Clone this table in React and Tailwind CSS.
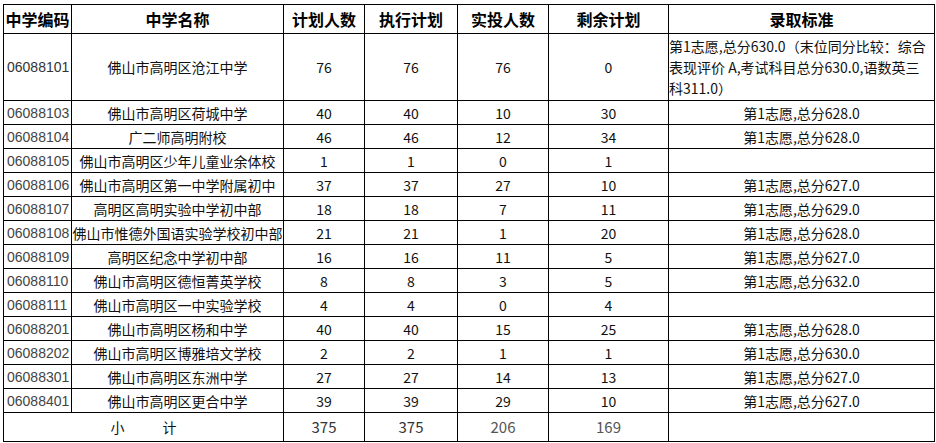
import React from 'react';

const rows = [
    ['06088103', '佛山市高明区荷城中学', 40, 40, 10, 30, '第1志愿,总分628.0'],
    ['06088104', '广二师高明附校', 46, 46, 12, 34, '第1志愿,总分628.0'],
    ['06088105', '佛山市高明区少年儿童业余体校', 1, 1, 0, 1, ''],
    ['06088106', '佛山市高明区第一中学附属初中', 37, 37, 27, 10, '第1志愿,总分627.0'],
    ['06088107', '高明区高明实验中学初中部', 18, 18, 7, 11, '第1志愿,总分629.0'],
    ['06088108', '佛山市惟德外国语实验学校初中部', 21, 21, 1, 20, '第1志愿,总分628.0'],
    ['06088109', '高明区纪念中学初中部', 16, 16, 11, 5, '第1志愿,总分627.0'],
    ['06088110', '佛山市高明区德恒菁英学校', 8, 8, 3, 5, '第1志愿,总分632.0'],
    ['06088111', '佛山市高明区一中实验学校', 4, 4, 0, 4, ''],
    ['06088201', '佛山市高明区杨和中学', 40, 40, 15, 25, '第1志愿,总分628.0'],
    ['06088202', '佛山市高明区博雅培文学校', 2, 2, 1, 1, '第1志愿,总分630.0'],
    ['06088301', '佛山市高明区东洲中学', 27, 27, 14, 13, '第1志愿,总分627.0'],
    ['06088401', '佛山市高明区更合中学', 39, 39, 29, 10, '第1志愿,总分627.0'],
];

const headers = ['中学编码', '中学名称', '计划人数', '执行计划', '实投人数', '剩余计划', '录取标准'];

export default function App() {
    const td = 'border border-black p-0 align-middle';
    return (
        <div className="bg-white w-[936px] h-[443px] pt-[4px] pl-[3px] font-['Noto_Sans_CJK_SC',sans-serif] text-[14px] text-[#111]">
            <table className="table-fixed border-collapse w-[931px]">
                <colgroup>
                    <col className="w-[68px]" />
                    <col className="w-[212px]" />
                    <col className="w-[81px]" />
                    <col className="w-[93px]" />
                    <col className="w-[91px]" />
                    <col className="w-[120px]" />
                    <col className="w-[266px]" />
                </colgroup>
                <thead>
                    <tr className="h-[29px]">
                        {headers.map(h => (
                            <th key={h} className={`${td} text-[16px] font-bold text-black text-center leading-none whitespace-nowrap`}>{h}</th>
                        ))}
                    </tr>
                </thead>
                <tbody>
                    <tr className="h-[67px]">
                        <td className={`${td} pl-[3px] text-[#333] font-['Liberation_Sans',sans-serif]`}>06088101</td>
                        <td className={`${td} text-center whitespace-nowrap`}>佛山市高明区沧江中学</td>
                        <td className={`${td} text-center`}>76</td>
                        <td className={`${td} text-center`}>76</td>
                        <td className={`${td} text-center`}>76</td>
                        <td className={`${td} text-center`}>0</td>
                        <td className={`${td} text-left leading-[21px] whitespace-nowrap`}>
                            第1志愿,总分630.0（末位同分比较：综合<br />
                            表现评价 A,考试科目总分630.0,语数英三<br />
                            科311.0）
                        </td>
                    </tr>
                    {rows.map(r => (
                        <tr key={r[0]} className="h-[24px]">
                            <td className={`${td} pl-[3px] text-[#444] font-['Liberation_Sans',sans-serif] leading-[22px]`}>{r[0]}</td>
                            <td className={`${td} text-center whitespace-nowrap leading-[22px]`}>{r[1]}</td>
                            <td className={`${td} text-center leading-[22px]`}>{r[2]}</td>
                            <td className={`${td} text-center leading-[22px]`}>{r[3]}</td>
                            <td className={`${td} text-center leading-[22px]`}>{r[4]}</td>
                            <td className={`${td} text-center leading-[22px]`}>{r[5]}</td>
                            <td className={`${td} text-center leading-[22px]`}>{r[6]}</td>
                        </tr>
                    ))}
                    <tr className="h-[29px]">
                        <td colSpan={2} className={`${td} text-center`}>
                            <span>小</span>
                            <span className="inline-block w-[38px]"></span>
                            <span>计</span>
                        </td>
                        <td className={`${td} text-center text-[15px] text-[#333]`}>375</td>
                        <td className={`${td} text-center text-[15px] text-[#333]`}>375</td>
                        <td className={`${td} text-center text-[15px] text-[#555]`}>206</td>
                        <td className={`${td} text-center text-[15px] text-[#555]`}>169</td>
                        <td className={td}></td>
                    </tr>
                </tbody>
            </table>
        </div>
    );
}
